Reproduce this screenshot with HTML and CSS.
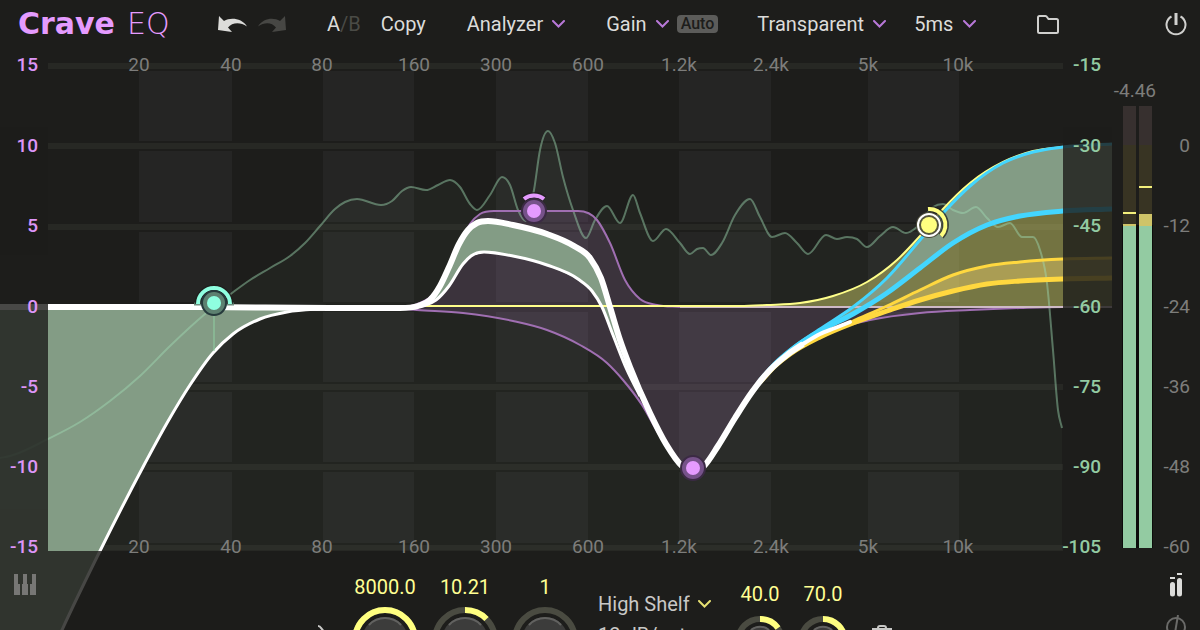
FILE: index.html
```html
<!DOCTYPE html>
<html lang="en">
<head>
<meta charset="utf-8">
<meta name="viewport" content="width=device-width, initial-scale=1">
<title>Crave EQ</title>
<link rel="stylesheet" href="styles.css">
</head>
<body>

<header class="toolbar">
  <h1 class="logo"><b>Crave</b><span>EQ</span></h1>

  <div class="history">
    <button type="button" aria-label="Undo">
      <svg width="29" height="17" viewBox="0 0 29 17"><path class="arrow" d="M1 0L0 14L14 16L10 11.500C14 6.500 22 5.500 29 10.500C24 2.500 13 1 6 5Z"/></svg>
    </button>
    <button type="button" aria-label="Redo" disabled>
      <svg width="29" height="17" viewBox="0 0 29 17"><path class="arrow" d="M27 0L28 14L14 16L18 11.500C14 6.500 7 5.500 0 10.500C5 2.500 15 1 22 5Z"/></svg>
    </button>
  </div>

  <div class="compare">
    <button type="button">A<span class="off">/B</span></button>
    <button type="button">Copy</button>
  </div>

  <button type="button" class="menu">Analyzer
    <svg class="chevron" width="13" height="8" viewBox="0 0 13 8"><path d="M1 1L6.500 6.500L12 1"/></svg>
  </button>

  <div class="gain">
    <button type="button" class="menu">Gain
      <svg class="chevron" width="13" height="8" viewBox="0 0 13 8"><path d="M1 1L6.500 6.500L12 1"/></svg>
    </button>
    <button type="button" class="auto">Auto</button>
  </div>

  <label class="menu phase">
    <select aria-label="Phase mode"><option>Transparent</option></select>
    <svg class="chevron" width="13" height="8" viewBox="0 0 13 8"><path d="M1 1L6.500 6.500L12 1"/></svg>
  </label>

  <label class="menu latency">
    <select aria-label="Latency"><option>5ms</option></select>
    <svg class="chevron" width="13" height="8" viewBox="0 0 13 8"><path d="M1 1L6.500 6.500L12 1"/></svg>
  </label>

  <button type="button" class="folder" aria-label="Presets">
    <svg width="22" height="19" viewBox="0 0 22 19"><path d="M2.500 1H8.500Q9.500 1 10 2L11.500 4H19.500Q21 4 21 5.500V16.500Q21 18 19.500 18H2.500Q1 18 1 16.500V2.500Q1 1 2.500 1Z"/></svg>
  </button>

  <button type="button" class="power" aria-label="Bypass">
    <svg width="22" height="23" viewBox="0 0 22 23"><path d="M6.500 3.500A9.500 9.500 0 1 0 15.500 3.500"/><path class="stem" d="M11 0V12"/></svg>
  </button>
</header>

<main>
  <svg class="chart" viewBox="0 48 1200 516" role="img" aria-label="Equalizer curve">
    <defs>
      <clipPath id="plot"><rect x="48" y="50" width="1015" height="501"/></clipPath>
      <clipPath id="outside"><path d="M0 48H48V551H400V800H0ZM1063 48H1112V551H1063Z"/></clipPath>
    </defs>

    <g class="bands">
      <rect x="139" y="66" width="93" height="484"/>
      <rect x="323" y="66" width="91" height="484"/>
      <rect x="496" y="66" width="92" height="484"/>
      <rect x="679" y="66" width="92" height="484"/>
      <rect x="868" y="66" width="91" height="484"/>
    </g>
    <path class="grid-gap" d="M48 66H1063M48 146H1063M48 227H1063M48 307H1063M48 387H1063M48 467H1063M48 548H1063"/>
    <path class="grid-line" d="M48 66H1063M48 146H1063M48 227H1063M48 387H1063M48 467H1063M48 548H1063"/>
    <path class="spectrum-fill" id="spectrum-fill" clip-path="url(#plot)"/>

    <g clip-path="url(#plot)">
      <g id="curves">
        <path class="fill-purple" id="bell-fill"/>
        <path class="fill-purple" id="dip-fill"/>
        <path class="fill-yellow" id="shelf-fill"/>
        <path class="fill-amber" id="side-fill"/>
        <path class="fill-green" id="cut-fill"/>
        <path class="fill-green" id="dyn-fill"/>
        <path class="fill-green" id="mid-fill"/>
        <path class="spectrum" id="spectrum"/>
        <path class="line-purple" id="bell"/>
        <path class="line-purple" id="dip"/>
        <path class="zero" d="M680 307H1112"/>
        <path class="line-yellow" id="shelf"/>
        <path class="line-amber" id="side"/>
        <path class="line-amber thick" id="side-static"/>
        <path class="line-blue" id="mid"/>
        <path class="line-blue thick" id="mid-static"/>
        <path class="line-white" id="cut"/>
        <path class="line-white" id="dyn"/>
        <path class="line-white thick" id="total"/>
        <path class="line-white taper" id="tail"/>
      </g>
    </g>
    <use class="ghost" href="#curves" clip-path="url(#outside)"/>

    <path class="node-stem" d="M214 314V351"/>

    <g class="node mint" transform="translate(214 303)">
      <path class="halo" d="M-20 1H20"/>
      <path class="ring-back" d="M-16 1A16 16 0 0 1 16 1"/>
      <path class="ring" d="M-16 1A16 16 0 0 1 16 1"/>
      <circle class="body" r="12"/>
      <circle class="core" r="7"/>
    </g>
    <g class="node purple" transform="translate(534 211)">
      <path class="ring-back" d="M-10 -12A16 16 0 0 1 10 -12"/>
      <path class="ring" d="M-10 -12A16 16 0 0 1 10 -12"/>
      <circle class="body" r="12"/>
      <circle class="core" r="7"/>
    </g>
    <g class="node purple" transform="translate(693 468)">
      <circle class="body" r="12"/>
      <circle class="core" r="7"/>
    </g>
    <g class="node yellow" transform="translate(929 225)">
      <path class="ring-back" d="M-1 -16A16 16 0 0 1 12 11"/>
      <path class="ring" d="M-1 -16A16 16 0 0 1 12 11"/>
      <circle class="body" r="12"/>
      <circle class="selected" r="11"/>
      <circle class="core" r="8"/>
    </g>

    <g class="scale gain-scale">
      <text x="38" y="71">15</text>
      <text x="38" y="152">10</text>
      <text x="38" y="232">5</text>
      <text x="38" y="313">0</text>
      <text x="38" y="393">-5</text>
      <text x="38" y="473">-10</text>
      <text x="38" y="553">-15</text>
    </g>
    <g class="scale freq-scale" id="freq-scale"></g>
    <g class="scale level-scale">
      <text x="1101" y="71">-15</text>
      <text x="1101" y="152">-30</text>
      <text x="1101" y="232">-45</text>
      <text x="1101" y="313">-60</text>
      <text x="1101" y="393">-75</text>
      <text x="1101" y="473">-90</text>
      <text x="1101" y="553">-105</text>
    </g>

    <g class="meter">
      <rect class="m-over" x="1123" y="106" width="13" height="39"/>
      <rect class="m-over" x="1139" y="106" width="13" height="39"/>
      <rect class="m-back" x="1123" y="145" width="13" height="80"/>
      <rect class="m-back" x="1139" y="145" width="13" height="70"/>
      <rect class="m-edge" x="1122" y="225" width="31" height="323"/>
      <rect class="m-level" x="1123" y="225" width="13" height="323"/>
      <rect class="m-level" x="1139" y="226" width="13" height="322"/>
      <rect class="m-hot" x="1123" y="224" width="13" height="2"/>
      <rect class="m-hot" x="1139" y="214" width="13" height="12"/>
      <rect class="m-peak" x="1123" y="212" width="13" height="2"/>
      <rect class="m-peak" x="1139" y="186" width="13" height="2"/>
    </g>
    <g class="scale meter-scale">
      <text x="1156" y="97">-4.46</text>
      <text x="1190" y="152">0</text>
      <text x="1190" y="232">-12</text>
      <text x="1190" y="313">-24</text>
      <text x="1190" y="393">-36</text>
      <text x="1190" y="473">-48</text>
      <text x="1190" y="553">-60</text>
    </g>
  </svg>
</main>

<footer class="band">
  <button type="button" class="piano" aria-label="Piano">
    <svg width="22" height="21" viewBox="0 0 22 21"><path d="M0 0H4V10H6V21H0ZM9 0H13V10H14V21H8V10H9ZM18 0H22V21H16V10H18Z"/></svg>
  </button>

  <button type="button" class="listen" aria-label="Listen">
    <svg width="24" height="24" viewBox="0 0 24 24"><path d="M14 1Q16 1 17 3L22 9"/></svg>
  </button>

  <div class="knobs">
    <label class="knob">
      <span>8000.0</span>
      <svg width="66" height="66" viewBox="0 0 66 66">
        <circle class="track" cx="33" cy="33" r="30"/>
        <circle class="value" cx="33" cy="33" r="30"/>
        <circle class="cap" cx="33" cy="33" r="23"/>
        <path class="shine" d="M17 18A22 22 0 0 1 49 18"/>
      </svg>
      <input type="range" min="10" max="24000" value="8000">
    </label>
    <label class="knob">
      <span>10.21</span>
      <svg width="66" height="66" viewBox="0 0 66 66">
        <circle class="track" cx="33" cy="33" r="30"/>
        <path class="value" d="M33 3A30 30 0 0 1 54.500 12"/>
        <circle class="cap" cx="33" cy="33" r="23"/>
        <path class="shine" d="M17 18A22 22 0 0 1 49 18"/>
      </svg>
      <input type="range" min="-30" max="30" value="10">
    </label>
    <label class="knob">
      <span>1</span>
      <svg width="66" height="66" viewBox="0 0 66 66">
        <circle class="track" cx="33" cy="33" r="30"/>
        <circle class="cap" cx="33" cy="33" r="23"/>
        <path class="shine" d="M17 18A22 22 0 0 1 49 18"/>
      </svg>
      <input type="range" min="0" max="10" value="1">
    </label>
  </div>

  <div class="shape">
    <label class="menu">
      <select aria-label="Filter type"><option>High Shelf</option></select>
      <svg class="chevron" width="13" height="8" viewBox="0 0 13 8"><path d="M1 1L6.500 6.500L12 1"/></svg>
    </label>
    <label class="menu">
      <select aria-label="Slope"><option>12 dB/oct</option></select>
    </label>
  </div>

  <div class="knobs small">
    <label class="knob">
      <span>40.0</span>
      <svg width="50" height="50" viewBox="0 0 50 50">
        <circle class="track" cx="25" cy="25" r="22"/>
        <path class="value" d="M25 3A22 22 0 0 1 43 12"/>
        <circle class="cap" cx="25" cy="25" r="15"/>
        <path class="shine" d="M16 14A14 14 0 0 1 34 14"/>
      </svg>
      <input type="range" min="0" max="100" value="40">
    </label>
    <label class="knob">
      <span>70.0</span>
      <svg width="50" height="50" viewBox="0 0 50 50">
        <circle class="track" cx="25" cy="25" r="22"/>
        <path class="value" d="M25 3A22 22 0 0 1 47 25"/>
        <circle class="cap" cx="25" cy="25" r="15"/>
        <path class="shine" d="M16 14A14 14 0 0 1 34 14"/>
      </svg>
      <input type="range" min="0" max="100" value="70">
    </label>
  </div>

  <button type="button" class="trash" aria-label="Delete band">
    <svg width="20" height="24" viewBox="0 0 20 24"><path d="M0 4H20M6 4V3Q6 1 8 1H12Q14 1 14 3V4M3 4V20Q3 22 5 22H15Q17 22 17 20V4"/></svg>
  </button>

  <div class="rail">
    <button type="button" aria-label="Stereo">
      <svg width="12" height="25" viewBox="0 0 12 25"><path class="bars" d="M2.500 12.500V22M9.500 8.500V22"/><path class="dots" d="M0 6H5M7 2H12"/></svg>
    </button>
    <button type="button" aria-label="Phase">
      <svg class="phi" width="22" height="24" viewBox="0 0 22 24"><ellipse cx="11" cy="12" rx="9" ry="9"/><path d="M13 0L9 24"/></svg>
    </button>
  </div>
</footer>

<script src="script.js"></script>
</body>
</html>
```

FILE: styles.css
```css
* {
  box-sizing: border-box;
}

body {
  margin: 0;
  height: 100vh;
  overflow: hidden;
  background: #1d1d1b;
  color: #dcdcda;
  font-family: Roboto, "Liberation Sans", sans-serif;
  font-size: 20px;
  line-height: 24px;
}

button,
select {
  margin: 0;
  padding: 0;
  border: 0;
  background: none;
  color: inherit;
  font: inherit;
  appearance: none;
  cursor: pointer;
}

svg {
  display: block;
  fill: none;
}

/* toolbar */

.toolbar {
  display: flex;
  align-items: center;
  height: 48px;
  padding: 0 13px 0 18px;
}

.logo {
  display: flex;
  gap: 12px;
  width: 159px;
  margin: 0;
  color: #e59bff;
  font-family: "DejaVu Sans", sans-serif;
  font-size: 30px;
  line-height: 48px;
  font-weight: 200;
}

.logo b {
  font-weight: 700;
}

.history {
  display: flex;
  gap: 11px;
  margin-left: 41px;
}

.arrow {
  fill: #dcdcda;
}

button:disabled .arrow {
  fill: #474744;
}

.compare {
  display: flex;
  gap: 20px;
  margin-left: 40px;
}

.off {
  color: #4a4b46;
}

.menu {
  display: flex;
  align-items: center;
  gap: 9px;
  margin-left: 41px;
}

.chevron {
  stroke: #b878d8;
  stroke-width: 2;
  stroke-linecap: round;
  pointer-events: none;
}

.gain {
  display: flex;
  align-items: center;
  gap: 8px;
}

.auto {
  padding: 0 4px;
  border-radius: 4px;
  background: #5c5c5a;
  color: #1d1d1b;
  font-size: 16px;
  font-weight: 500;
  line-height: 18px;
}

.phase {
  margin-left: 39px;
}

.latency {
  margin-left: 28px;
}

.folder {
  margin-left: 61px;
}

.folder svg,
.power svg {
  stroke: #d0d0ce;
  stroke-width: 2;
}

.power {
  margin-left: auto;
}

.power .stem {
  stroke-width: 3;
}

/* chart */

.chart {
  width: 100%;
  overflow: visible;
}

.bands {
  fill: #252524;
}

.grid-gap {
  stroke: #1d1d1b;
  stroke-width: 10;
}

.grid-line {
  stroke: #272824;
  stroke-width: 6;
}

.spectrum-fill {
  fill: rgba(140, 180, 130, 0.05);
}

.spectrum {
  stroke: rgba(160, 220, 180, 0.45);
  stroke-width: 2;
}

.fill-purple {
  fill: rgba(232, 155, 255, 0.13);
}

.fill-yellow {
  fill: rgba(255, 255, 130, 0.38);
}

.fill-amber {
  fill: rgba(255, 220, 110, 0.38);
}

.fill-green {
  fill: #839c85;
}

.line-purple {
  stroke: #a06fb2;
  stroke-width: 2;
}

.line-yellow {
  stroke: #ffff8a;
  stroke-width: 2;
}

.line-amber {
  stroke: #ffd83f;
  stroke-width: 3;
}

.line-blue {
  stroke: #43d6ff;
  stroke-width: 3;
}

.line-amber.thick,
.line-blue.thick {
  stroke-width: 5;
}

.line-white {
  stroke: #fff;
  stroke-width: 3;
}

.line-white.thick {
  stroke-width: 6;
}

.line-white.taper {
  stroke-width: 4;
  stroke-linecap: round;
}

.zero {
  stroke: #cdb9c6;
  stroke-width: 2;
}

.ghost {
  opacity: 0.19;
}

.node-stem {
  stroke: #8fd0a2;
}

.node .body {
  stroke-width: 2;
}

.node .ring {
  stroke-width: 4;
}

.node .ring-back {
  stroke: rgba(29, 29, 27, 0.7);
  stroke-width: 7;
}

.mint .halo {
  stroke: #6f8f80;
  stroke-width: 3;
}

.mint .ring {
  stroke: #8fffe0;
}

.mint .body {
  fill: #5d8070;
  stroke: #263a3c;
}

.mint .core {
  fill: #8fffe0;
}

.purple .ring {
  stroke: #e59bff;
}

.purple .body {
  fill: #76528a;
  stroke: #3b2a44;
}

.purple .core {
  fill: #e59bff;
}

.yellow .ring {
  stroke: #ffff80;
}

.yellow .body {
  fill: #55553c;
  stroke: #4c4c3a;
}

.yellow .selected {
  stroke: #fff;
  stroke-width: 2;
}

.yellow .core {
  fill: #ffff80;
}

.scale {
  font-size: 19px;
  text-anchor: end;
}

.gain-scale {
  fill: #dd95f7;
  font-weight: 500;
}

.freq-scale {
  fill: #7d7d7b;
  text-anchor: middle;
}

.level-scale {
  fill: #93cba2;
  font-weight: 500;
}

.meter-scale {
  fill: #7d7d7b;
}

.m-over {
  fill: #37302f;
}

.m-back {
  fill: #383423;
}

.m-edge {
  fill: #0c0c0b;
}

.m-level {
  fill: #93cba2;
}

.m-hot {
  fill: #cfc468;
}

.m-peak {
  fill: #f3f07c;
}

/* band controls */

.band {
  position: relative;
  display: flex;
  align-items: flex-start;
  padding: 0 13px 0 14px;
}

.piano {
  margin-top: 10px;
}

.piano svg {
  fill: #777775;
}

.listen {
  margin: 61px 0 0 268px;
}

.listen svg,
.trash svg {
  stroke: #c8c8c6;
  stroke-width: 2;
}

.knobs {
  display: flex;
  gap: 14px;
  margin: 11px 0 0 24px;
}

.knob {
  position: relative;
  display: flex;
  flex-direction: column;
  align-items: center;
  gap: 8px;
  width: 66px;
  color: #ffff93;
}

.small {
  gap: 13px;
  margin-top: 18px;
}

.small .knob {
  gap: 10px;
  width: 50px;
}

.knob input {
  position: absolute;
  inset: 32px 0 0;
  width: 100%;
  margin: 0;
  opacity: 0;
}

.track {
  stroke: #4a4b41;
  stroke-width: 6;
}

.value {
  stroke: #ffff80;
  stroke-width: 6;
}

.cap {
  fill: #3c3c3b;
}

.shine {
  stroke: #626260;
  stroke-width: 2;
}

.shape {
  display: flex;
  flex-direction: column;
  gap: 7px;
  margin: 28px 0 0 20px;
  color: #c8c8c6;
}

.shape .menu {
  gap: 8px;
  margin: 0;
}

.shape .chevron {
  stroke: #e6e072;
}

.trash {
  margin: 61px 0 0 24px;
}

.rail {
  display: flex;
  flex-direction: column;
  align-items: center;
  gap: 18px;
  margin: 8px 0 0 auto;
}

.bars {
  stroke: #dcdcda;
  stroke-width: 5;
  stroke-linecap: round;
}

.dots {
  stroke: #dcdcda;
  stroke-width: 2;
}

.phi {
  stroke: #6a6a68;
  stroke-width: 2;
}
```

FILE: script.js
```js
// curve samples, x and y in chart units
const curves = {
  spectrum: [[0,458],[10,456],[48,439],[80,422],[110,401],[140,376],[170,346],[205,314],[232,293],[250,280],[270,268],[290,256],[305,243],[320,226],[335,209],[345,202],[357,199],[381,205],[392,201],[402,191],[411,187],[426,190],[438,185],[450,180],[460,187],[470,204],[477,210],[490,195],[502,177],[510,185],[518,210],[526,221],[534,190],[540,150],[548,131],[555,143],[563,177],[573,210],[586,238],[595,220],[607,206],[620,223],[633,195],[640,213],[653,241],[666,229],[680,243],[690,254],[697,249],[703,248],[711,255],[722,243],[735,215],[750,199],[760,217],[772,237],[785,233],[797,243],[808,254],[826,235],[837,239],[847,237],[857,239],[867,247],[880,236],[893,227],[906,233],[917,227],[933,207],[943,204],[953,210],[963,213],[976,207],[987,218],[998,227],[1010,223],[1022,237],[1033,237],[1040,250],[1047,283],[1053,350],[1058,410],[1062,428]],
  bell: [[380,307],[400,307],[420,303],[434,294],[447,275],[460,244],[470,224],[480,214],[494,211],[578,211],[597,220],[610,243],[625,280],[640,299],[657,305],[680,307]],
  dip: [[380,307],[417,310],[463,313],[513,321],[547,330],[580,345],[607,363],[623,380],[642,405],[660,436],[680,463],[693,470],[706,463],[735,418],[768,372],[800,347],[833,330],[870,320],[920,313],[970,310],[1020,308],[1063,307],[1112,307]],
  shelf: [[420,306],[600,306],[740,306],[767,305],[800,303],[833,296],[867,282],[897,260],[920,236],[943,209],[970,183],[1003,162],[1033,151],[1063,147],[1112,144]],
  mid: [[760,381],[775,364],[790,350],[820,329],[853,307],[887,278],[920,240],[945,211],[970,186],[1003,163],[1033,152],[1063,147],[1112,144]],
  'mid-static': [[760,381],[775,364],[790,351],[820,331],[853,314],[887,293],[920,268],[953,243],[987,225],[1020,216],[1063,211],[1112,209]],
  side: [[760,382],[775,366],[790,353],[820,336],[853,321],[887,306],[920,290],[953,275],[987,266],[1020,262],[1063,259],[1112,258]],
  'side-static': [[760,382],[775,366],[790,354],[820,337],[853,323],[887,311],[920,300],[953,291],[987,284],[1020,281],[1063,279],[1112,278]],
  cut: [[57,641],[62,630],[100,551],[143,467],[167,423],[190,385],[213,353],[233,334],[260,319],[287,312],[320,309],[350,308]],
  dyn: [[410,307],[425,305],[436,300],[449,286],[463,264],[471,256],[484,252],[513,256],[547,265],[578,279],[592,291],[602,307],[613,335],[627,370],[640,396]],
  total: [[0,307],[200,307],[330,308],[400,308],[418,306],[430,300],[440,286],[449,267],[459,244],[468,230],[477,223],[488,221],[513,225],[547,234],[574,246],[590,258],[601,278],[610,307],[620,340],[630,367],[650,413],[666,444],[682,466],[693,472],[704,466],[718,446],[735,418],[752,392],[770,370],[787,355],[803,344]],
  tail: [[795,349],[803,344],[820,334],[835,328],[850,322]]
};

const freqs = [[139, '20'], [231, '40'], [322, '80'], [414, '160'], [496, '300'], [588, '600'], [679, '1.2k'], [771, '2.4k'], [868, '5k'], [958, '10k']];

// slope of the curve at point i
function slope(p, i) {
  const before = i > 0 ? (p[i][1] - p[i - 1][1]) / (p[i][0] - p[i - 1][0]) : null;
  const after = i < p.length - 1 ? (p[i + 1][1] - p[i][1]) / (p[i + 1][0] - p[i][0]) : null;
  if (before === null) return after;
  if (after === null) return before;
  // flat at peaks and valleys, so nothing overshoots
  if (before * after <= 0) return 0;
  const h1 = p[i][0] - p[i - 1][0];
  const h2 = p[i + 1][0] - p[i][0];
  const s = (before * h2 + after * h1) / (h1 + h2);
  const max = 3 * Math.min(Math.abs(before), Math.abs(after));
  return Math.sign(s) * Math.min(Math.abs(s), max);
}

// smooth line through the points
function smooth(p) {
  let d = 'M' + p[0].join(' ');
  for (let i = 0; i < p.length - 1; i++) {
    const [x1, y1] = p[i];
    const [x2, y2] = p[i + 1];
    const w = (x2 - x1) / 3;
    d += `C${x1 + w} ${y1 + w * slope(p, i)} ${x2 - w} ${y2 - w * slope(p, i + 1)} ${x2} ${y2}`;
  }
  return d;
}

function setPath(id, d) {
  document.getElementById(id).setAttribute('d', d);
}

// area between two curves
function between(top, bottom) {
  return smooth(top) + bottom.slice().reverse().map(p => 'L' + p.join(' ')).join('') + 'Z';
}

for (const id in curves) {
  setPath(id, smooth(curves[id]));
}

setPath('spectrum-fill', smooth(curves.spectrum) + 'V550H0Z');
setPath('bell-fill', smooth(curves.bell) + 'Z');
setPath('dip-fill', smooth(curves.dip) + 'Z');
setPath('shelf-fill', smooth(curves.shelf) + 'V307H420Z');
setPath('side-fill', between(curves.side, curves['side-static']));
setPath('cut-fill', smooth(curves.cut) + 'V307H0V641Z');
setPath('mid-fill', between(curves.mid, curves['mid-static']));
setPath('dyn-fill', between(curves.total.slice(4, 20), curves.dyn));

const scale = document.getElementById('freq-scale');
for (const y of [71, 553]) {
  for (const [x, label] of freqs) {
    const t = document.createElementNS('http://www.w3.org/2000/svg', 'text');
    t.setAttribute('x', x);
    t.setAttribute('y', y);
    t.textContent = label;
    scale.append(t);
  }
}
```
